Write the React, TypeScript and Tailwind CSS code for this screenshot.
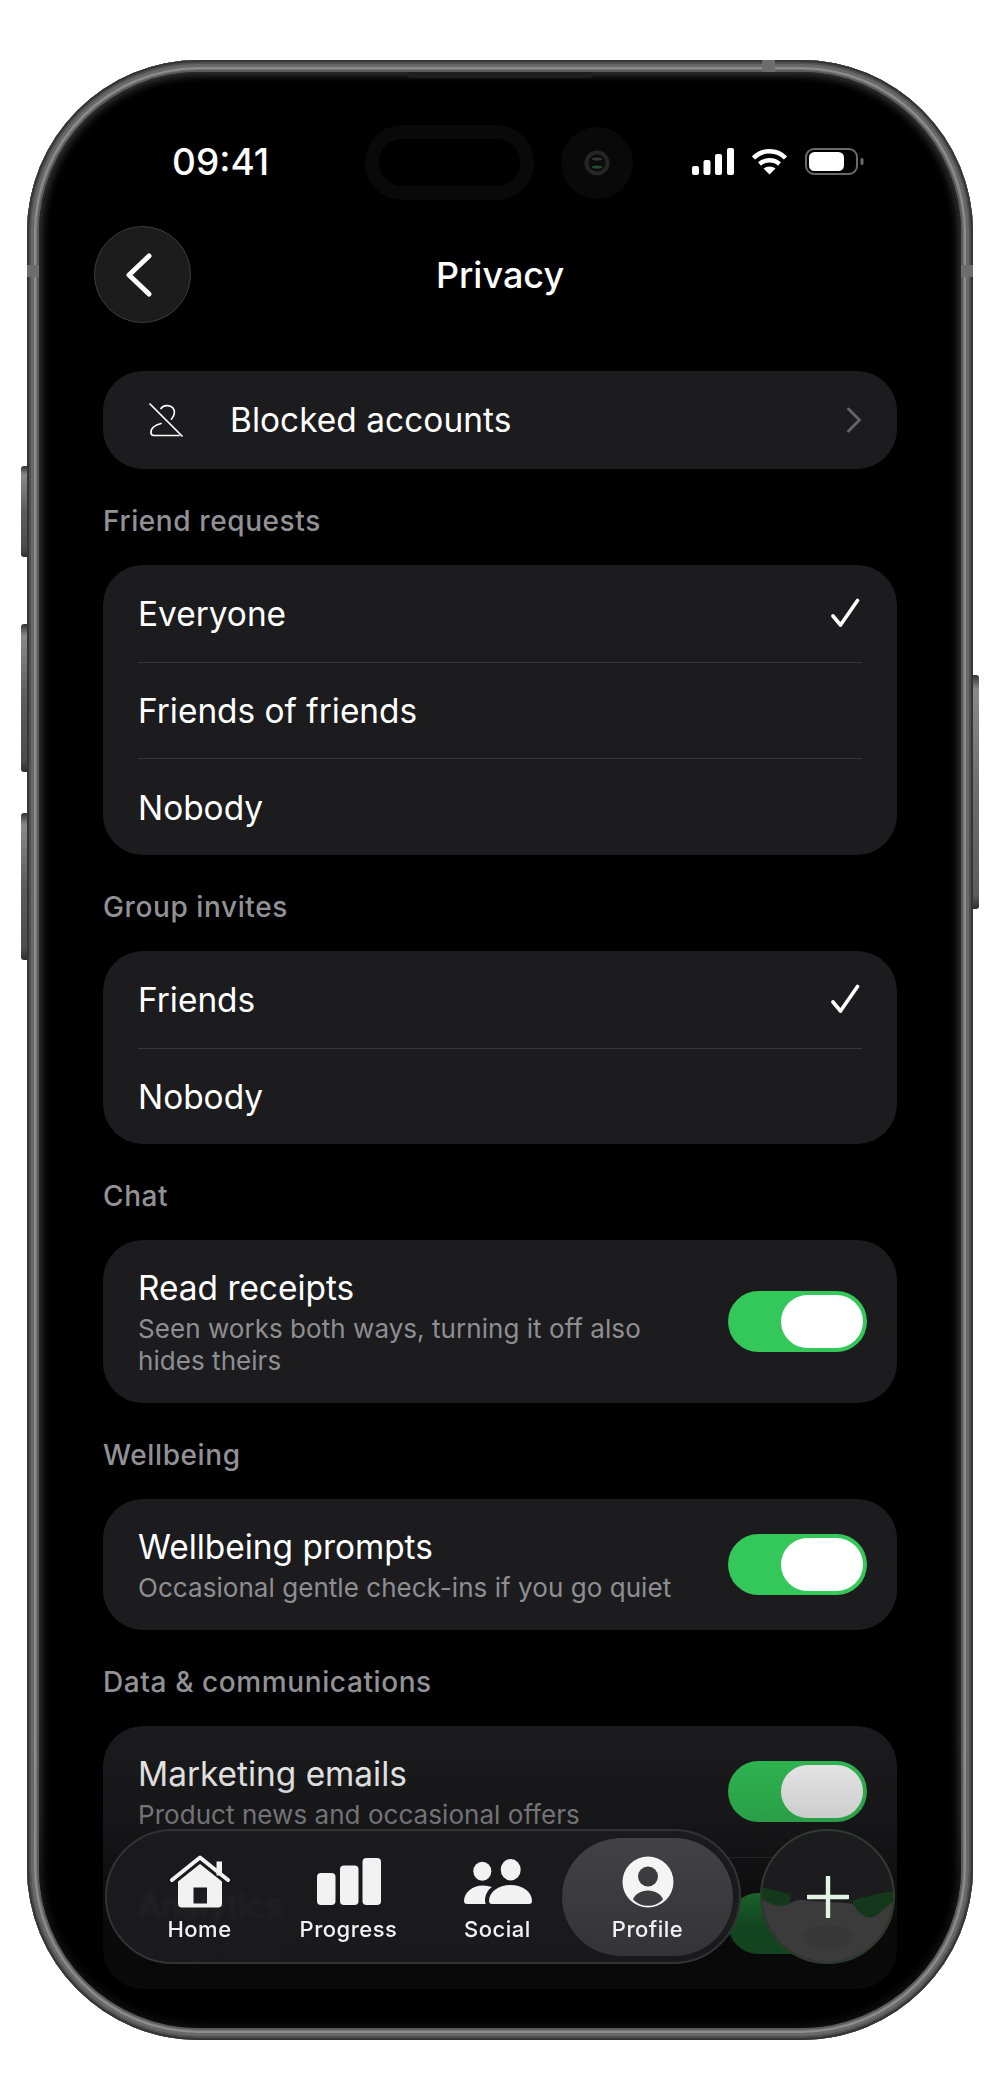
import React from "react";

function Toggle() {
  return (
    <div className="w-[139px] h-[61px] shrink-0 rounded-full bg-[#34c759] flex items-center justify-end pr-[4px]">
      <div className="w-[82px] h-[53px] rounded-full bg-white" />
    </div>
  );
}

function Check() {
  return (
    <svg width="30" height="30" viewBox="0 0 30 30" fill="none" className="shrink-0 mr-[2px]">
      <path d="M3 18 L10.5 27 L27.5 2.5" stroke="#fff" strokeWidth="3.6" strokeLinecap="round" strokeLinejoin="round" />
    </svg>
  );
}

function Label({ children }: { children: React.ReactNode }) {
  return (
    <div className="h-[40px] mt-[32px] mb-[24px] flex items-center text-[28px] font-medium tracking-[0.6px] text-[#929296]">
      {children}
    </div>
  );
}

function Row({ text, check, border }: { text: string; check?: boolean; border?: boolean }) {
  return (
    <div className={`h-[96.67px] flex items-center justify-between ${border ? "border-t border-[#363638]" : ""}`}>
      <span className="pt-[1px]">{text}</span>
      {check ? <Check /> : null}
    </div>
  );
}

function ToggleRow({ title, sub, border }: { title: string; sub: React.ReactNode; border?: boolean }) {
  return (
    <div className={`flex items-center justify-between pt-[28px] pb-[26px] ${border ? "border-t border-[#363638]" : ""}`}>
      <div className="w-[550px]">
        <div className="h-[41px] leading-[41px]">{title}</div>
        <div className="mt-[4px] text-[26px] leading-[32px] tracking-[0.05px] text-[#8e8e93]">{sub}</div>
      </div>
      <div className="-mr-[5px] -mt-[2px]">
        <Toggle />
      </div>
    </div>
  );
}

function NavItem({ label, children, active }: { label: string; children: React.ReactNode; active?: boolean }) {
  return (
    <div
      className={`h-[118px] flex flex-col items-center justify-center pt-[5px] rounded-full ${
        active ? "w-[171px] -ml-[10px] bg-[linear-gradient(180deg,#424244,#343436)]" : "w-[149px]"
      }`}
    >
      <div className="h-[53px] flex items-center justify-center">{children}</div>
      <div className="mt-[7px] h-[28px] leading-[28px] text-[22px] font-medium tracking-[0.5px] text-[#f2f2f2]">{label}</div>
    </div>
  );
}

export default function App() {
  return (
    <div className="w-[1000px] h-[2100px] bg-white pt-[60px] pl-[27px] font-['Inter','Liberation_Sans',sans-serif]">
      <div className="relative w-[946px] h-[1980px] rounded-[172px] bg-[#5a5a5a] p-[12px] shadow-[inset_0_0_0_2px_#353535,inset_0_0_0_4px_#505050,inset_0_0_0_7px_#686868,inset_0_0_0_9px_#8c8c8c,inset_0_0_0_10px_#777]">
        {/* side buttons */}
        <div className="absolute -left-[6px] top-[406px] w-[6px] h-[91px] rounded-l-[3px] bg-[linear-gradient(180deg,#333,#8a8a8a_10%,#5c5c5c_50%,#4c4c4c_90%,#2e2e2e)]" />
        <div className="absolute -left-[6px] top-[564px] w-[6px] h-[148px] rounded-l-[3px] bg-[linear-gradient(180deg,#333,#8a8a8a_8%,#5c5c5c_50%,#4c4c4c_92%,#2e2e2e)]" />
        <div className="absolute -left-[6px] top-[753px] w-[6px] h-[147px] rounded-l-[3px] bg-[linear-gradient(180deg,#333,#8a8a8a_8%,#5c5c5c_50%,#4c4c4c_92%,#2e2e2e)]" />
        <div className="absolute -right-[6px] top-[615px] w-[6px] h-[234px] rounded-r-[3px] bg-[linear-gradient(180deg,#333,#8a8a8a_6%,#6c6c6c_50%,#5c5c5c_94%,#2e2e2e)]" />
        {/* antenna bands */}
        <div className="absolute left-0 top-[205px] w-[12px] h-[12px] bg-[#6c6c6c]" />
        <div className="absolute right-0 top-[205px] w-[12px] h-[12px] bg-[#6c6c6c]" />
        <div className="absolute top-0 left-[735px] w-[13px] h-[12px] bg-[#6c6c6c]" />

        <div className="relative h-full rounded-[160px] overflow-hidden bg-black text-white shadow-[inset_0_0_9px_3px_#383838]">
          {/* status bar */}
          <div className="pt-[76px] pl-[133px] pr-[97px] h-[103px] flex items-center justify-between">
            <div className="text-[37px] leading-[27px] font-medium">09:41</div>
            <div className="flex items-center gap-[17px]">
              <svg width="42" height="27" viewBox="0 0 42 27" fill="#fff">
                <rect x="0" y="18" width="7" height="9" rx="2" />
                <rect x="11.5" y="12" width="7" height="15" rx="2" />
                <rect x="23" y="6" width="7" height="21" rx="2" />
                <rect x="35" y="0" width="7" height="27" rx="2" />
              </svg>
              <svg width="37" height="27" viewBox="0 0 37 27" fill="none">
                <path d="M2.5 10 C11 1 26 1 34.5 10" stroke="#fff" strokeWidth="4.4" />
                <path d="M8.5 16 C14 11 23 11 28.5 16" stroke="#fff" strokeWidth="4.4" />
                <path d="M12.5 20.5 C16 17.8 21 17.8 24.5 20.5 L18.5 26.5Z" fill="#fff" />
              </svg>
              <svg width="59" height="27" viewBox="0 0 59 27" fill="none">
                <rect x="1" y="1" width="51" height="25" rx="8" stroke="#6a6a6a" strokeWidth="2" />
                <rect x="4" y="4" width="35" height="19" rx="5.5" fill="#fff" />
                <rect x="55.5" y="10" width="3" height="7" rx="1.5" fill="#6a6a6a" />
              </svg>
            </div>
          </div>

          {/* island */}
          <div className="absolute top-0 left-[368px] w-[186px] h-[6px] rounded-b-[4px] bg-[#1e1e1e]" />
          <div className="absolute left-[326px] top-[53px] w-[169px] h-[75px] rounded-full border-[14px] border-[#090909]" />
          <div className="absolute left-[522px] top-[55px] w-[72px] h-[72px] rounded-full bg-[#090909] flex items-center justify-center">
            <svg width="26" height="26" viewBox="0 0 26 26">
              <circle cx="13" cy="13" r="12.5" fill="#262626" />
              <circle cx="13" cy="13" r="8.5" fill="#0c0c0c" />
              <ellipse cx="13" cy="9" rx="5" ry="1.6" fill="#303a33" />
              <ellipse cx="13" cy="17" rx="5" ry="1.6" fill="#264d31" />
            </svg>
          </div>

          {/* header */}
          <div className="mt-[51px] px-[55px] grid grid-cols-[1fr_auto_1fr] items-center">
            <div className="w-[97px] h-[97px] rounded-full bg-[#1c1c1c] border border-[#3c3c3c] flex items-center justify-center">
              <svg width="32" height="48" viewBox="0 0 32 48" fill="none" className="-ml-[6px]">
                <path d="M25 5 L5 24 L25 43" stroke="#fff" strokeWidth="5" strokeLinecap="round" strokeLinejoin="round" />
              </svg>
            </div>
            <div className="text-[36px] font-medium">Privacy</div>
            <div />
          </div>

          {/* content */}
          <div className="mt-[48px] px-[64px] text-[33.4px]">
            <div className="h-[98px] rounded-[40px] bg-[#1c1c1e] flex items-center pl-[46px] pr-[35px]">
              <svg width="34" height="34" viewBox="0 0 34 34" fill="none" stroke="#fff" strokeWidth="1.7" strokeLinecap="round" className="shrink-0">
                <path d="M1 1 L33 33" />
                <path d="M12 5.5 C14 2 21 1.5 24 5 C26.5 8.5 25 13 22.5 16" />
                <path d="M12 20.5 C6 22 1.5 25.5 2 30 C2.2 32 3.5 32.5 5 32.5 H30" />
              </svg>
              <span className="ml-[47px] flex-1 pt-[1px] tracking-[0.05px]">Blocked accounts</span>
              <svg width="16" height="26" viewBox="0 0 16 26" fill="none">
                <path d="M2.5 2 L13.5 13 L2.5 24" stroke="#636366" strokeWidth="3" strokeLinecap="round" strokeLinejoin="round" />
              </svg>
            </div>

            <Label>Friend requests</Label>
            <div className="rounded-[40px] bg-[#1c1c1e] px-[35px]">
              <Row text="Everyone" check />
              <Row text="Friends of friends" border />
              <Row text="Nobody" border />
            </div>

            <Label>Group invites</Label>
            <div className="rounded-[40px] bg-[#1c1c1e] px-[35px]">
              <Row text="Friends" check />
              <Row text="Nobody" border />
            </div>

            <Label>Chat</Label>
            <div className="rounded-[40px] bg-[#1c1c1e] px-[35px]">
              <ToggleRow title="Read receipts" sub="Seen works both ways, turning it off also hides theirs" />
            </div>

            <Label>Wellbeing</Label>
            <div className="rounded-[40px] bg-[#1c1c1e] px-[35px]">
              <ToggleRow title="Wellbeing prompts" sub="Occasional gentle check-ins if you go quiet" />
            </div>

            <Label>Data &amp; communications</Label>
            <div className="rounded-[40px] bg-[#1c1c1e] px-[35px]">
              <ToggleRow title="Marketing emails" sub="Product news and occasional offers" />
              <ToggleRow title="Analytics" sub="Usage data" border />
            </div>
          </div>

          {/* bottom fade */}
          <div className="absolute left-0 right-0 bottom-0 h-[330px] bg-[linear-gradient(180deg,rgba(0,0,0,0)_0%,rgba(0,0,0,0.2)_37%,rgba(0,0,0,0.65)_69%,rgba(0,0,0,0.7)_100%)]" />

          {/* tab bar */}
          <div className="absolute left-[66px] bottom-[64px] flex items-center gap-[19px]">
            <div className="w-[636px] h-[135px] rounded-full border-2 border-[#333335] bg-[#1c1c1e]/90 backdrop-blur-[2px] pl-[18px] flex items-center">
              <NavItem label="Home">
                <svg width="60" height="53" viewBox="0 0 60 53" fill="#f2f2f2">
                  <path d="M2 25 L30 2.5 L58 25" fill="none" stroke="#f2f2f2" strokeWidth="4" strokeLinecap="round" strokeLinejoin="round" />
                  <rect x="46.5" y="6.5" width="5.5" height="14" />
                  <path
                    fillRule="evenodd"
                    d="M8 26.5 L30 9 L52 26.5 V48.5 a4 4 0 0 1 -4 4 H12 a4 4 0 0 1 -4 -4 Z M23.5 32.5 V48.5 H37 V32.5 Z"
                  />
                </svg>
              </NavItem>
              <NavItem label="Progress">
                <svg width="64" height="47" viewBox="0 0 64 47" fill="#f2f2f2">
                  <rect x="0" y="15" width="18.5" height="32" rx="4" />
                  <rect x="23" y="7.5" width="18.5" height="39.5" rx="4" />
                  <rect x="45.5" y="0" width="18.5" height="47" rx="4" />
                </svg>
              </NavItem>
              <NavItem label="Social">
                <svg width="68" height="45" viewBox="0 0 68 45" fill="#f2f2f2">
                  <ellipse cx="18.3" cy="12.3" rx="9" ry="9.5" />
                  <ellipse cx="46.7" cy="10.7" rx="10" ry="10.7" />
                  <path d="M25 42 C25 33 34 26 46.5 26 S68 33 68 42 a3 3 0 0 1 -3 3 H28 a3 3 0 0 1 -3 -3 Z" />
                  <path d="M0 42 c0 -8 8 -15.5 19 -15.5 c3 0 6 .5 9 1.5 c-4.5 3 -7 8 -7 14 c0 1 .3 2 .8 3 H3 a3 3 0 0 1 -3 -3 Z" />
                </svg>
              </NavItem>
              <NavItem label="Profile" active>
                <svg width="52" height="52" viewBox="0 0 52 52">
                  <circle cx="26" cy="26" r="25.5" fill="#f4f4f4" />
                  <circle cx="26" cy="20.5" r="10" fill="#3c3c3e" />
                  <path d="M11 43.5 C13 38 19 34.5 26 34.5 C33 34.5 39 38 41 43.5 C37 47.5 32 49.8 26 49.8 C20 49.8 15 47.5 11 43.5 Z" fill="#3c3c3e" />
                </svg>
              </NavItem>
            </div>

            <div className="relative w-[135px] h-[135px] rounded-full overflow-hidden bg-[#1c1c1e] border-2 border-[#2f3a31] flex items-center justify-center">
              <svg width="135" height="135" viewBox="0 0 135 135" className="absolute -left-[2px] -top-[2px]">
                <path d="M0 58 C10 60 22 62 30 66 L30 80 L0 80 Z" fill="#15381c" />
                <path d="M92 72 C102 68 122 64 135 62 V92 H100 Z" fill="#15381c" />
                <path d="M0 68 C10 76 18 78 28 76 C33 72 38 70 44 71 C60 73 80 73 93 75 C98 84 106 90 113 88 C120 86 126 76 135 72 V135 H0 Z" fill="#3a3b3a" />
                <ellipse cx="68" cy="108" rx="24" ry="12" fill="#363736" />
              </svg>
              <svg width="42" height="42" viewBox="0 0 42 42" className="relative" fill="none">
                <path d="M21 1 V41 M1 21 H41" stroke="#e2f5e4" strokeWidth="4.4" strokeLinecap="round" />
              </svg>
            </div>
          </div>
        </div>
      </div>
    </div>
  );
}
